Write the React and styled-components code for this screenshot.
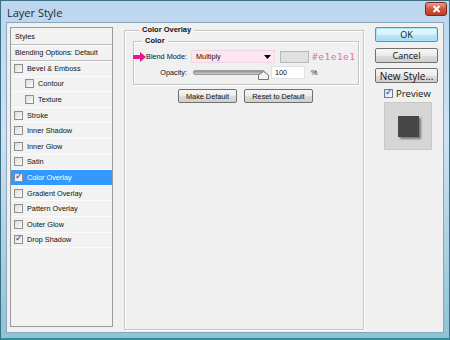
import React from "react";
import styled, { createGlobalStyle } from "styled-components";

const Global = createGlobalStyle`
  html, body { margin: 0; padding: 0; background: #fff; }
  body { font-family: "Liberation Sans", Arial, sans-serif; }
`;

const styles = [
  { label: "Bevel & Emboss" },
  { label: "Contour", indent: true },
  { label: "Texture", indent: true },
  { label: "Stroke" },
  { label: "Inner Shadow" },
  { label: "Inner Glow" },
  { label: "Satin" },
  { label: "Color Overlay", checked: true, selected: true },
  { label: "Gradient Overlay" },
  { label: "Pattern Overlay" },
  { label: "Outer Glow" },
  { label: "Drop Shadow", checked: true },
];

export default function App() {
  return (
    <>
      <Global />
      <Window>
        <TitleBar>
          <Title>Layer Style</Title>
          <CloseBtn>
            <svg width="9" height="8" viewBox="0 0 9 8">
              <path d="M1.5 1 L7.5 7 M7.5 1 L1.5 7" stroke="#fff" strokeWidth="2" />
            </svg>
          </CloseBtn>
        </TitleBar>
        <Client>
          <StyleList>
            <HeadRow $h={17}>Styles</HeadRow>
            <HeadRow $h={16}>Blending Options: Default</HeadRow>
            {styles.map((s) => (
              <Item key={s.label} $selected={s.selected} $indent={s.indent}>
                <Check $checked={s.checked} />
                <span>{s.label}</span>
              </Item>
            ))}
          </StyleList>

          <Group>
            <Legend>Color Overlay</Legend>
            <InnerGroup>
              <Legend $inner>Color</Legend>
              <FieldRow>
                <Arrow>
                  <svg width="13" height="10" viewBox="0 0 13 10">
                    <path d="M0 3 H7 V0 L13 5 L7 10 V7 H0 Z" fill="#ec148c" />
                  </svg>
                </Arrow>
                <Label $w={45}>Blend Mode:</Label>
                <Select>
                  <span>Multiply</span>
                  <svg width="7" height="4" viewBox="0 0 7 4">
                    <path d="M0 0 H7 L3.5 4 Z" fill="#000" />
                  </svg>
                </Select>
                <Swatch />
                <HexNote>#e1e1e1</HexNote>
              </FieldRow>
              <FieldRow>
                <Label $w={57}>Opacity:</Label>
                <Slider>
                  <Track />
                  <Thumb>
                    <svg width="11" height="9" viewBox="0 0 11 9">
                      <path d="M0.5 8.5 V4 L5.5 0.5 L10.5 4 V8.5 Z" fill="#f4f4f4" stroke="#777" />
                    </svg>
                  </Thumb>
                </Slider>
                <NumInput>100</NumInput>
                <Unit>%</Unit>
              </FieldRow>
            </InnerGroup>
            <ButtonRow>
              <SmallButton $w={59}>Make Default</SmallButton>
              <SmallButton $w={69}>Reset to Default</SmallButton>
            </ButtonRow>
          </Group>

          <Side>
            <Button $default>OK</Button>
            <Button>Cancel</Button>
            <Button $big>New Style...</Button>
            <PreviewToggle>
              <Check $checked $blue />
              <span>Preview</span>
            </PreviewToggle>
            <PreviewBox>
              <PreviewSquare />
            </PreviewBox>
          </Side>
        </Client>
      </Window>
    </>
  );
}

const Window = styled.div`
  width: 450px;
  height: 340px;
  box-sizing: border-box;
  display: flex;
  flex-direction: column;
  background: linear-gradient(180deg, #bcd6ee 0%, #cfe1f3 40%, #8fc3d4 100%);
  border: 1px solid #3c6f86;
  border-bottom: 2px solid #2e8f9e;
  padding: 0 5px 5px 5px;
  overflow: hidden;
`;

const TitleBar = styled.div`
  height: 21px;
  display: flex;
  align-items: center;
  justify-content: space-between;
  flex-shrink: 0;
`;

const Title = styled.div`
  font-family: "Open Sans", "DejaVu Sans", sans-serif;
  font-size: 11px;
  color: #1a2a3a;
  padding-left: 1px;
  margin-top: 1px;
`;

const CloseBtn = styled.div`
  width: 20px;
  height: 12px;
  margin-top: -6px;
  margin-right: -3px;
  border-radius: 3px;
  border: 1px solid #7a2a1e;
  background: linear-gradient(180deg, #e8a08f 0%, #d2533c 50%, #c03a22 100%);
  display: flex;
  align-items: center;
  justify-content: center;
`;

const Client = styled.div`
  flex: 1;
  background: #f0f0f0;
  border: 1px solid #8aa8bc;
  display: flex;
  align-items: flex-start;
  padding: 4px 0 0 3px;
  font-size: 7.3px;
  color: #111;
  white-space: nowrap;
`;

const StyleList = styled.div`
  width: 103px;
  height: 300px;
  border: 1px solid #9a9a9a;
  box-sizing: border-box;
  background: #f2f2f2;
  display: flex;
  flex-direction: column;
`;

const HeadRow = styled.div`
  height: ${(p) => p.$h}px;
  box-sizing: border-box;
  flex-shrink: 0;
  display: flex;
  align-items: center;
  padding-left: 4px;
  border-bottom: 1px solid #bdbdbd;
  box-shadow: 0 1px 0 #fff;
`;

const Item = styled.div`
  height: 15.6px;
  flex-shrink: 0;
  display: flex;
  align-items: center;
  gap: 4px;
  padding-left: ${(p) => (p.$indent ? 14 : 3)}px;
  background: ${(p) => (p.$selected ? "#3399ff" : "transparent")};
  color: ${(p) => (p.$selected ? "#fff" : "#111")};
  border-bottom: 1px solid #fbfbfb;
  box-sizing: border-box;
`;

const Check = styled.span`
  width: 9px;
  height: 9px;
  box-sizing: border-box;
  border: 1px solid ${(p) => (p.$blue ? "#5a7fb0" : "#8e8f8f")};
  background: linear-gradient(135deg, #dcdcdc, #fafafa);
  position: relative;
  flex-shrink: 0;
  &::after {
    content: ${(p) => (p.$checked ? '"✓"' : '""')};
    position: absolute;
    left: 0px;
    top: -3px;
    font-size: 9px;
    font-weight: bold;
    color: #2a3f7a;
    font-family: "DejaVu Sans", sans-serif;
  }
`;

const Group = styled.div`
  position: relative;
  margin-left: 11px;
  margin-top: 3px;
  width: 240px;
  height: 300px;
  box-sizing: border-box;
  border: 1px solid #c4c4c4;
  box-shadow: inset 1px 1px 0 #fff, 1px 1px 0 #fff;
  padding: 10px 4px 0 8px;
`;

const Legend = styled.div`
  position: absolute;
  top: -6px;
  left: ${(p) => (p.$inner ? 8 : 14)}px;
  padding: 0 3px;
  background: #f0f0f0;
  font-weight: bold;
  font-size: 7.5px;
  line-height: 10px;
`;

const InnerGroup = styled.div`
  position: relative;
  height: 44px;
  border: 1px solid #c4c4c4;
  box-shadow: inset 1px 1px 0 #fff, 1px 1px 0 #fff;
  box-sizing: border-box;
  padding: 8px 0 0 0;
  display: flex;
  flex-direction: column;
  gap: 3px;
`;

const FieldRow = styled.div`
  display: flex;
  align-items: center;
  height: 13px;
`;

const Arrow = styled.span`
  width: 13px;
  display: flex;
  margin-left: -1px;
`;

const Label = styled.span`
  width: ${(p) => p.$w}px;
  text-align: right;
  padding-right: 4px;
  box-sizing: border-box;
  flex-shrink: 0;
`;

const Select = styled.div`
  width: 84px;
  height: 13px;
  box-sizing: border-box;
  background: #fde6f0;
  border: 1px solid #f0d6e2;
  display: flex;
  align-items: center;
  justify-content: space-between;
  padding: 0 3px 0 4px;
`;

const Swatch = styled.div`
  width: 29px;
  height: 12px;
  margin-left: 5px;
  box-sizing: border-box;
  background: #e1e1e1;
  border: 1px solid #b8b8b8;
`;

const HexNote = styled.span`
  margin-left: 3px;
  color: #f06aa8;
  font-family: "DejaVu Sans Mono", "Liberation Mono", monospace;
  font-size: 9.5px;
  letter-spacing: 0.5px;
`;

const Slider = styled.div`
  position: relative;
  width: 72px;
  height: 13px;
  margin-left: 2px;
  display: flex;
  align-items: center;
`;

const Track = styled.div`
  width: 100%;
  height: 3px;
  border-radius: 2px;
  background: linear-gradient(180deg, #8e8e8e, #cfcfcf);
  border: 1px solid #9a9a9a;
`;

const Thumb = styled.span`
  position: absolute;
  right: -4px;
  top: 5px;
  display: flex;
`;

const NumInput = styled.div`
  width: 34px;
  height: 13px;
  margin-left: 6px;
  box-sizing: border-box;
  background: #fff;
  border: 1px solid #e2e2e2;
  padding-left: 3px;
  display: flex;
  align-items: center;
`;

const Unit = styled.span`
  margin-left: 6px;
`;

const ButtonRow = styled.div`
  display: flex;
  gap: 7px;
  margin-top: 4px;
  padding-left: 45px;
`;

const SmallButton = styled.div`
  width: ${(p) => p.$w}px;
  height: 14px;
  box-sizing: border-box;
  border: 1px solid #707070;
  border-radius: 2px;
  background: linear-gradient(180deg, #f6f6f6 0%, #ebebeb 50%, #dcdcdc 51%, #cfcfcf 100%);
  display: flex;
  align-items: center;
  justify-content: center;
`;

const Side = styled.div`
  margin-left: 11px;
  display: flex;
  flex-direction: column;
  width: 63px;
`;

const Button = styled.div`
  height: 15px;
  box-sizing: border-box;
  margin-bottom: ${(p) => (p.$big ? 4 : 5)}px;
  border: 1px solid ${(p) => (p.$default ? "#3c9ec9" : "#707070")};
  border-radius: 2px;
  box-shadow: ${(p) => (p.$default ? "inset 0 0 0 1px #a8e3f6" : "none")};
  background: ${(p) =>
    p.$default
      ? "linear-gradient(180deg, #eaf6fd 0%, #d9f0fc 50%, #bee6fd 51%, #a7d9f5 100%)"
      : "linear-gradient(180deg, #f6f6f6 0%, #ebebeb 50%, #dcdcdc 51%, #cfcfcf 100%)"};
  display: flex;
  align-items: center;
  justify-content: center;
  font-family: "Open Sans", "DejaVu Sans", sans-serif;
  font-size: ${(p) => (p.$big ? 10 : 9)}px;
  color: #111;
  &:nth-child(2) { margin-top: 1px; }
`;

const PreviewToggle = styled.div`
  display: flex;
  align-items: center;
  gap: 3px;
  margin-left: 9px;
  height: 12px;
  font-family: "Open Sans", "DejaVu Sans", sans-serif;
  font-size: 9.5px;
`;

const PreviewBox = styled.div`
  width: 48px;
  height: 48px;
  margin: 3px 0 0 9px;
  box-sizing: border-box;
  background: #d6d6d6;
  border: 1px solid #c8c8c8;
  display: flex;
  align-items: center;
  justify-content: center;
`;

const PreviewSquare = styled.div`
  width: 21px;
  height: 21px;
  background: #474747;
  box-shadow: 2px 2px 2px rgba(0, 0, 0, 0.45);
`;
